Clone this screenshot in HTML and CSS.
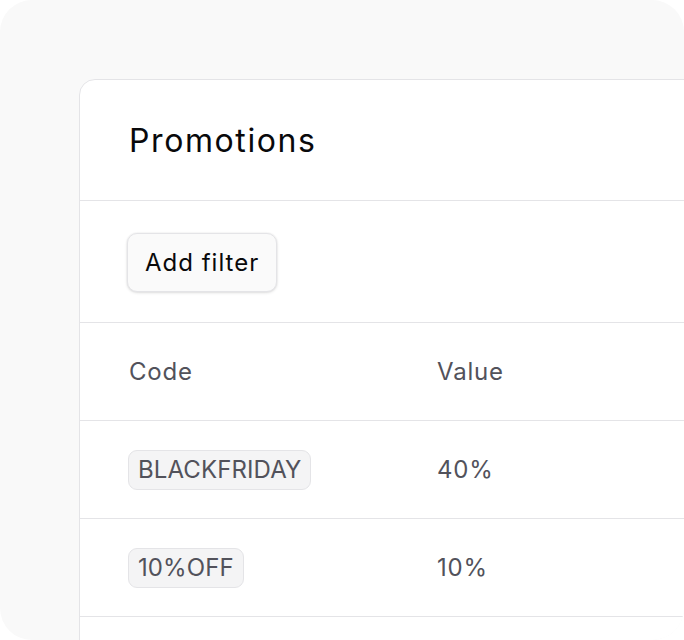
FILE: index.html
```html
<!DOCTYPE html>
<html>
<head>
<meta charset="utf-8">
<link rel="stylesheet" href="styles.css">
</head>
<body>
<div class="frame">
  <div class="card">
    <div class="card-header">
      <h1 class="title">Promotions</h1>
    </div>
    <div class="filters">
      <button class="btn">Add filter</button>
    </div>
    <div class="table">
      <div class="row head">
        <div class="cell code">Code</div>
        <div class="cell">Value</div>
      </div>
      <div class="row">
        <div class="cell code"><span class="badge">BLACKFRIDAY</span></div>
        <div class="cell">40%</div>
      </div>
      <div class="row">
        <div class="cell code"><span class="badge">10%OFF</span></div>
        <div class="cell">10%</div>
      </div>
      <div class="row"></div>
    </div>
  </div>
</div>
</body>
</html>
```
FILE: styles.css
```css
* { box-sizing: border-box; }
html, body { margin: 0; padding: 0; background: #ffffff; }
body { font-family: Inter, "Noto Sans", sans-serif; }
.frame {
  width: 684px;
  height: 640px;
  background: #f9f9f9;
  border-radius: 32px;
  overflow: hidden;
  padding: 79px 0 0 79px;
}
.card {
  width: 700px;
  height: 700px;
  background: #ffffff;
  border: 1px solid #e4e4e7;
  border-radius: 16px 0 0 0;
}
.card-header {
  height: 121px;
  border-bottom: 1px solid #e4e4e7;
  padding: 0 0 0 49px;
  display: flex;
  align-items: center;
}
.title {
  margin: 0;
  font-size: 32px;
  font-weight: 400;
  color: #09090b;
  letter-spacing: 1.6px;
}
.filters {
  height: 122px;
  border-bottom: 1px solid #e4e4e7;
  padding: 32px 0 0 47px;
}
.btn {
  font-family: inherit;
  height: 59px;
  padding: 0 17px;
  font-size: 24px;
  font-weight: 400;
  letter-spacing: 1px;
  color: #09090b;
  background: #fafafa;
  border: 1px solid #e4e4e7;
  border-radius: 10px;
  box-shadow: 0 1px 3px rgba(0,0,0,0.12), 0 0 0 1px rgba(0,0,0,0.02);
}
.row {
  height: 98px;
  border-bottom: 1px solid #e4e4e7;
  display: flex;
  align-items: center;
  padding-left: 49px;
  font-size: 24px;
  letter-spacing: 0.8px;
  color: #52525b;
}
.row.head { font-weight: 400; }
.cell.code { width: 308px; }
.badge {
  display: inline-block;
  height: 40px;
  line-height: 38px;
  padding: 0 9px;
  background: #f4f4f5;
  border: 1px solid #e4e4e7;
  border-radius: 9px;
  font-size: 24px;
  font-weight: 400;
  letter-spacing: 0.1px;
  color: #52525b;
  margin-left: -1px;
}
```
